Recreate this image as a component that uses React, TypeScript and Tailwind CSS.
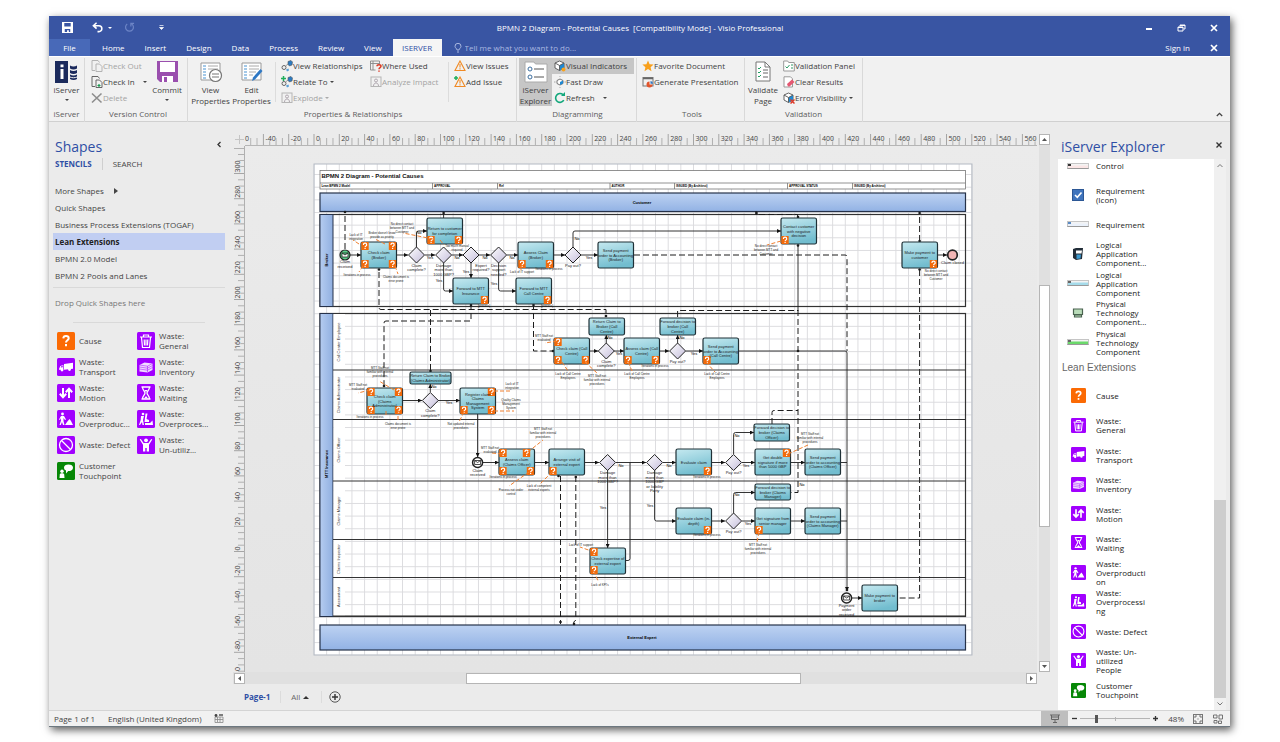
import React from "react";

type Pt = { x: number; y: number };
type Corner = "tl" | "tr" | "bl" | "br" | "tm";
type Task = Pt & { w?: number; h?: number; t: string[]; q?: Corner[] };

const FONT = "'Open Sans','Noto Sans',sans-serif";

/* ---------- stencil icons ---------- */

const ORANGE = "#fb6a04";
const PURPLE = "#a100ff";
const GREEN = "#068706";

const glyphs: Record<string, React.ReactNode> = {
  cause: (
    <g fill="none" stroke="#fff" strokeWidth="2">
      <path d="M6.3 6.4C6.4 4.6 7.6 4 9 4c1.500 0 2.700.8 2.700 2.200 0 2-2.700 2-2.700 4.200" />
      <path d="M9 12v2.200" />
    </g>
  ),
  general: (
    <g fill="none" stroke="#fff" strokeWidth="1.200">
      <path d="M3 5h12M6.500 4.700V3h5v1.700M4.500 5.500l1 10h7l1-10M7.200 7.500l.3 6M9 7.500v6M10.800 7.500l-.3 6" />
    </g>
  ),
  transport: (
    <g fill="#fff">
      <path d="M7 6l9-1.200v5.900l-9 1zM2 11l1.300-3 3-1v4.800H2z" />
      <circle cx="5" cy="12" r="1.400" />
      <circle cx="12.500" cy="11.500" r="1.400" />
      <path d="M3.700 9.500L4.500 8l1.200-.3v1.500z" fill={PURPLE} />
    </g>
  ),
  inventory: (
    <g>
      <path d="M2.500 7l5-2.500 8 1v6.500l-5 2.500-8-1z" fill="#f0dcff" />
      <path d="M2.500 7l8 1.200 5-2.700M2.500 9l8 1.200 5-2.700M2.500 11l8 1.200 5-2.700M10.500 8v6" fill="none" stroke={PURPLE} strokeWidth=".5" />
    </g>
  ),
  motion: (
    <g fill="none" stroke="#fff" strokeWidth="2">
      <path d="M6 4v9M2.800 9.800L6 13.200l3.200-3.400M12 14V5M8.800 8.200L12 4.800l3.200 3.400" />
    </g>
  ),
  waiting: (
    <g fill="none" stroke="#fff" strokeWidth="1.300">
      <path d="M4.500 3h9M4.500 15h9M5.500 3c0 3.500 2.500 4 2.500 6s-2.500 2.500-2.500 6M12.500 3c0 3.500-2.500 4-2.500 6s2.500 2.500 2.500 6" />
      <path d="M7 14.500l2-2.500 2 2.500zM7.300 6h3.400L9 8z" fill="#fff" stroke="none" />
    </g>
  ),
  overproduction: (
    <g fill="#fff">
      <circle cx="5.500" cy="4" r="1.400" />
      <path d="M4 6h3l2 3.500-1 .5-1.500-2V11l1 4H6l-1-3-1.200 3H2.500L4 10.500V8l-1 2-1-.4zM8 15l2-3 2.500-3 1.500 2 2 4z" />
    </g>
  ),
  overprocessing: (
    <g fill="#fff">
      <circle cx="6" cy="4" r="1.300" />
      <path d="M4 6h3l-1 4 1 5H5.500L5 12l-2 3H2l1.700-5zM8.500 3.500h2L9.500 9l2.500 1v2H7.500zM8 13h5l2.500-2.500L16 15H8z" />
    </g>
  ),
  defect: (
    <g fill="none" stroke="#fff" strokeWidth="1.300">
      <circle cx="9" cy="9" r="6.500" />
      <path d="M4.500 4.500l9 9" />
    </g>
  ),
  people: (
    <g fill="#fff">
      <circle cx="9" cy="4.300" r="1.900" />
      <path d="M2.700 3.500L3.800 3l2.800 4h4.800l2.800-4 1.100.5-3.300 5.300v6.700h-2.300V12H8.300v3.500H6V8.800z" />
    </g>
  ),
  customer: (
    <g fill="#fff">
      <circle cx="5" cy="9.300" r="1.700" />
      <path d="M2.500 16l.3-3.500c.1-1 1-1.300 2.200-1.300s2 .5 2.200 1.300L7.500 16z" />
      <path d="M7 5.500c0-2 1.800-3 4.500-3s4.500 1 4.500 3.200c0 2.300-2 3.400-4.800 3.400L9 11.500V8.600C7.700 8 7 7 7 5.500z" />
    </g>
  ),
};

function Tile({ kind, className }: { kind: string; className: string }) {
  const bg = kind === "cause" ? ORANGE : kind === "customer" ? GREEN : PURPLE;
  return (
    <svg viewBox="0 0 18 18" className={className} aria-hidden="true">
      <rect width="18" height="18" rx="1.500" fill={bg} />
      {glyphs[kind]}
    </svg>
  );
}

const stencil: { kind: string; short: string[]; long: string[] }[] = [
  { kind: "cause", short: ["Cause"], long: ["Cause"] },
  { kind: "general", short: ["Waste:", "General"], long: ["Waste:", "General"] },
  { kind: "transport", short: ["Waste:", "Transport"], long: ["Waste:", "Transport"] },
  { kind: "inventory", short: ["Waste:", "Inventory"], long: ["Waste:", "Inventory"] },
  { kind: "motion", short: ["Waste:", "Motion"], long: ["Waste:", "Motion"] },
  { kind: "waiting", short: ["Waste:", "Waiting"], long: ["Waste:", "Waiting"] },
  { kind: "overproduction", short: ["Waste:", "Overproduc..."], long: ["Waste:", "Overproducti", "on"] },
  { kind: "overprocessing", short: ["Waste:", "Overproces..."], long: ["Waste:", "Overprocessi", "ng"] },
  { kind: "defect", short: ["Waste: Defect"], long: ["Waste: Defect"] },
  { kind: "people", short: ["Waste:", "Un-utiliz..."], long: ["Waste: Un-", "utilized", "People"] },
  { kind: "customer", short: ["Customer", "Touchpoint"], long: ["Customer", "Touchpoint"] },
];

function Lines({ t }: { t: string[] }) {
  return (
    <>
      {t.map((l, i) => (
        <span key={i} className="block whitespace-nowrap">
          {l}
        </span>
      ))}
    </>
  );
}

/* ---------- ribbon ---------- */

const Ic = ({ children, className = "h-3 w-3" }: { children: React.ReactNode; className?: string }) => (
  <svg viewBox="0 0 12 12" className={"shrink-0 " + className} fill="none" aria-hidden="true">
    {children}
  </svg>
);

const doc = (c: string) => <path d="M1 .5h6l1.500 2M1 .5v10h3M5 4h3.500L11 6.500v5H5z" stroke={c} />;
const link = (
  <>
    <circle cx="3" cy="7.500" r="2" stroke="#666" />
    <path d="M7 1.500l3-1 1.500 1.500-.5 3-2.500 1L7 4.500z" fill="#2b7cc4" stroke="#555" strokeWidth=".6" />
    <path d="M5 9.500l2.500-1 .5 2-2 1z" fill="#5aa0d8" />
    <path d="M4.500 6L7 4" stroke="#888" strokeWidth=".8" />
  </>
);
const cube = (
  <>
    <path d="M1 3l4.500-2L10 3v5l-4.500 2.500L1 8z" fill="#fff" stroke="#555" strokeWidth=".9" />
    <path d="M5.500 5.500L10 3v5l-4.500 2.500z" fill="#1e88d2" />
    <path d="M1 3l4.500 2.500L10 3M5.500 5.500v5" stroke="#555" strokeWidth=".9" />
  </>
);
const person = (
  <>
    <rect x="1" y="1" width="10" height="9.500" stroke="#b5b5b5" />
    <circle cx="6" cy="4.500" r="1.500" stroke="#b0a8b0" />
    <path d="M3.500 10c0-4 5-4 5 0" stroke="#b0a8b0" />
  </>
);
const warn = <path d="M6 1l5 9.500H1zM6 4v3.500M6 8.300v1.200" stroke="#f08a24" strokeWidth="1.100" />;

const icons: Record<string, React.ReactNode> = {
  checkOut: doc("#b3b3b3"),
  checkIn: (
    <>
      {doc("#666")}
      <path d="M6.500 9.500h3M8 8v3" stroke="#1a9a50" strokeWidth="1.200" />
    </>
  ),
  del: <path d="M1 1.500l9.500 9M10.500 1.500L1 10.500" stroke="#8d8d8d" strokeWidth="1.600" />,
  viewRel: link,
  relate: (
    <>
      {link}
      <path d="M0 2.500h5M2.500 0v5" stroke="#1fae5b" strokeWidth="1.500" />
    </>
  ),
  explode: person,
  analyze: person,
  where: (
    <>
      <path d="M.5 1h9v3.500M.5 1v9h5M.5 3.500h9M3 1v9" stroke="#888" strokeWidth=".9" />
      <path d="M7 6.300c0-2 4-2 4 0 0 1.300-2 1.300-2 3M9 10.500v1.300" stroke="#dd3b26" strokeWidth="1.500" />
    </>
  ),
  viewIssue: warn,
  addIssue: (
    <>
      {warn}
      <path d="M0 2h4M2 0v4" stroke="#1fae5b" strokeWidth="1.500" />
    </>
  ),
  visual: (
    <>
      {cube}
      <circle cx="9.500" cy="9.500" r="2" fill="#f9a21b" />
    </>
  ),
  fast: (
    <>
      <path d="M6 3l3 1.500v3L6 9 3 7.500v-3z" fill="#fff" stroke="#666" strokeWidth=".9" />
      <path d="M6 6l3-1.500v3L6 9z" fill="#1e88d2" />
      <path d="M0 6h1.500M10.500 6H12M6 0v1M6 11v1" stroke="#aaa" />
    </>
  ),
  refresh: (
    <>
      <path d="M9.800 8.200A4.400 4.400 0 1 1 9 2.700" stroke="#12a77b" strokeWidth="1.600" />
      <path d="M7 4h4V0z" fill="#12a77b" />
    </>
  ),
  star: <path d="M6 .5l1.600 3.700 4 .3-3 2.700.9 4L6 9.100l-3.500 2.100.9-4-3-2.700 4-.3z" fill="#f8a01c" />,
  present: (
    <>
      <rect x="1" y="1.500" width="10" height="8.500" stroke="#777" />
      <path d="M1 2.500h10" stroke="#666" strokeWidth="1.500" />
      <path d="M7.500 5.500a3 3 0 1 0 3 3h-3z" fill="#e2552c" />
      <path d="M8.500 5v2.700H11A2.700 2.700 0 0 0 8.500 5z" fill="#2f78c4" />
    </>
  ),
  vpanel: (
    <>
      <path d="M.7 1h4l1 1.500h5.600V11H.7z" fill="#fff" stroke="#999" />
      <path d="M2.500 6.500l1.500 1.500L6.500 5M8 5h2M8 8h2" stroke="#2d9b67" />
    </>
  ),
  clear: (
    <>
      <path d="M1 .8h6.500l2 2V11H1z" fill="#fff" stroke="#999" />
      <path d="M4 8l5-4.500 2.500 2.500-5 4.500H5z" fill="#e45872" />
    </>
  ),
  error: (
    <>
      {cube}
      <path d="M7.500 7.500l4 4M11.500 7.500l-4 4" stroke="#dc3a2a" strokeWidth="1.500" />
    </>
  ),
};

function Caret({ muted, className = "" }: { muted?: boolean; className?: string }) {
  return (
    <svg viewBox="0 0 4 2" className={"h-[2px] w-1 shrink-0 " + className} aria-hidden="true">
      <path d="M0 0h4L2 2z" fill={muted ? "#aaa" : "#444"} />
    </svg>
  );
}

type SmallProps = { icon: string; label: string; muted?: boolean; active?: boolean; caret?: "near" | "far" };
function Small({ icon, label, muted, active, caret }: SmallProps) {
  return (
    <button
      type="button"
      disabled={muted}
      className={
        "flex h-4 items-center pr-1 pl-[2px] whitespace-nowrap " +
        (muted ? "text-[#a3a3a3] " : "text-[#3f3f3f] ") +
        (active ? "bg-[#c6c6c6]" : "")
      }
    >
      <Ic>{icons[icon]}</Ic>
      <span>{label}</span>
      {caret && <Caret muted={muted} className={caret === "far" ? "ml-2" : "ml-[2px]"} />}
    </button>
  );
}

function Big({ children, label, caret, active, className }: { children: React.ReactNode; label: string[]; caret?: boolean; active?: boolean; className: string }) {
  return (
    <button type="button" className={"flex h-12 flex-col items-center pt-[2px] leading-[11px] text-[#3f3f3f] " + (active ? "bg-[#c6c6c6] " : "") + className}>
      <span className="flex h-6 items-center">{children}</span>
      <Lines t={label} />
      {caret && <Caret className="mt-1" />}
    </button>
  );
}

function Group({ name, className, children }: { name: string; className: string; children: React.ReactNode }) {
  return (
    <section aria-label={name} className={"flex shrink-0 flex-col border-r border-[#d9d9d9] " + className}>
      <div className="flex h-12">{children}</div>
      <p className="text-center text-[8px] leading-4 text-[#5c5c5c]">{name}</p>
    </section>
  );
}

const Rule = () => <span className="my-1 w-px shrink-0 bg-[#dcdcdc]" />;

function Ribbon() {
  return (
    <div className="flex h-[65px] items-start border-b border-[#d0d0d0] bg-[#f1f1f1] pt-px text-[8px]">
      <Group name="iServer" className="w-9">
        <Big label={["iServer"]} caret className="w-full">
          <svg viewBox="0 0 24 24" className="h-6 w-6" aria-hidden="true">
            <path d="M0 1h13v22H0z" fill="#1b2a5c" />
            <path d="M5.500 9h3v10h-3zM5.500 4.500h3v2.800h-3z" fill="#fff" />
            <path d="M15 5.500c2 1.200 5 1.200 7 0v3c-2 1.200-5 1.200-7 0zM15 10c2 1.200 5 1.200 7 0v3c-2 1.200-5 1.200-7 0zM15 14.500c2 1.200 5 1.200 7 0v4.500c-2 1.200-5 1.200-7 0z" fill="#1b2a5c" />
            <path d="M15 17c2 1 5 1 7 0" stroke="#f1f1f1" fill="none" />
          </svg>
        </Big>
      </Group>
      <Group name="Version Control" className="w-[103px] pl-1">
        <div className="flex w-[60px] flex-col items-start">
          <Small icon="checkOut" label="Check Out" muted />
          <Small icon="checkIn" label="Check In" caret="far" />
          <Small icon="del" label="Delete" muted />
        </div>
        <Big label={["Commit"]} caret className="w-9">
          <svg viewBox="0 0 24 24" className="h-6 w-6" aria-hidden="true">
            <path d="M2 1h21v21H5l-3-3z" fill="#9a4fae" />
            <path d="M5 2h15v10H5z" fill="#fff" />
            <path d="M7 16h11v6H7z" fill="#fff" />
            <path d="M9 17h3v5H9z" fill="#9a4fae" />
          </svg>
        </Big>
      </Group>
      <Group name="Properties & Relationships" className="w-[329px] pl-[2px]">
        <Big label={["View", "Properties"]} className="w-[41px]">
          <svg viewBox="0 0 24 24" className="h-6 w-6" fill="none" aria-hidden="true">
            <path d="M2 3h19v17H2z" fill="#fff" stroke="#999" />
            <path d="M4 6h3M4 9h3M4 12h3M4 15h3M4 18h3" stroke="#4b93d1" strokeWidth="1.200" />
            <path d="M9 6h10M9 9h10" stroke="#aaa" />
            <circle cx="16.500" cy="15.500" r="6" fill="#fff" stroke="#777" strokeWidth="1.200" />
            <path d="M13 14h7M13 17h7" stroke="#777" strokeWidth="1.200" />
          </svg>
        </Big>
        <Big label={["Edit", "Properties"]} className="w-[41px]">
          <svg viewBox="0 0 24 24" className="h-6 w-6" fill="none" aria-hidden="true">
            <path d="M2 3h19v17H2z" fill="#fff" stroke="#999" />
            <path d="M4 6h3M4 9h3M4 12h3M4 15h3M4 18h3" stroke="#4b93d1" strokeWidth="1.200" />
            <path d="M9 6h10M9 9h10M9 12h7M9 15h4" stroke="#aaa" />
            <path d="M12 21l1-3.500L20.500 9l2 2-7.500 8.500z" fill="#2f78c4" />
          </svg>
        </Big>
        <span className="w-[3px]" />
        <Rule />
        <div className="flex w-[92px] flex-col items-start pl-[3px]">
          <Small icon="viewRel" label="View Relationships" />
          <Small icon="relate" label="Relate To" caret="near" />
          <Small icon="explode" label="Explode" muted caret="near" />
        </div>
        <div className="flex w-20 flex-col items-start">
          <Small icon="where" label="Where Used" />
          <Small icon="analyze" label="Analyze Impact" muted />
        </div>
        <Rule />
        <div className="flex flex-col items-start pl-[3px]">
          <Small icon="viewIssue" label="View Issues" />
          <Small icon="addIssue" label="Add Issue" />
        </div>
      </Group>
      <Group name="Diagramming" className="w-[120px] pl-[2px]">
        <Big label={["iServer", "Explorer"]} active className="w-[33px]">
          <svg viewBox="0 0 24 24" className="h-6 w-6" fill="none" aria-hidden="true">
            <path d="M1 2h9l1.500 2H23v18H1z" fill="#fff" stroke="#aaa" />
            <circle cx="6" cy="9" r="2" stroke="#3c6e9f" />
            <circle cx="6" cy="17" r="2" stroke="#3c6e9f" />
            <path d="M10 9h10M10 17h10" stroke="#555" />
          </svg>
        </Big>
        <div className="flex w-[82px] flex-col">
          <Small icon="visual" label="Visual Indicators" active />
          <Small icon="fast" label="Fast Draw" />
          <Small icon="refresh" label="Refresh" caret="far" />
        </div>
      </Group>
      <Group name="Tools" className="w-[108px] pl-[3px]">
        <div className="flex flex-col items-start">
          <Small icon="star" label="Favorite Document" />
          <Small icon="present" label="Generate Presentation" />
        </div>
      </Group>
      <Group name="Validation" className="w-[118px]">
        <Big label={["Validate", "Page"]} className="w-9">
          <svg viewBox="0 0 24 24" className="h-6 w-6" fill="none" aria-hidden="true">
            <path d="M5 2h9l5 5v14H5z" fill="#fff" stroke="#777" />
            <path d="M14 2v5h5" stroke="#777" />
            <path d="M7 8l1 1 2-2M7 12l1 1 2-2M7 16l1 1 2-2" stroke="#22a065" />
            <path d="M12 10h5M12 13h5M12 17h5" stroke="#666" />
          </svg>
        </Big>
        <div className="flex flex-col items-start">
          <Small icon="vpanel" label="Validation Panel" />
          <Small icon="clear" label="Clear Results" />
          <Small icon="error" label="Error Visibility" caret="near" />
        </div>
      </Group>
      <button type="button" aria-label="Collapse the ribbon" className="mt-auto mr-[7px] mb-1 ml-auto">
        <svg viewBox="0 0 7 5" className="h-[5px] w-[7px]" fill="none" aria-hidden="true">
          <path d="M.8 4l2.700-2.700L6.200 4" stroke="#444" strokeWidth="1.300" />
        </svg>
      </button>
    </div>
  );
}

/* ---------- diagram ---------- */

const tasks: Task[] = [
  { x: 361, y: 242, t: ["Check claim", "(Broker)"], q: ["tl", "tr", "bl", "br"] },
  { x: 427, y: 218, t: ["Return to customer", "for completion"], q: ["bl", "br"] },
  { x: 518, y: 242, t: ["Assess Claim", "(Broker)"], q: ["bl", "br"] },
  { x: 598, y: 242, t: ["Send payment", "order to Accounting", "(Broker)"] },
  { x: 453, y: 278, t: ["Forward to MTT", "Insurance"], q: ["br"] },
  { x: 516, y: 278, t: ["Forward to MTT", "Call Centre"], q: ["br"] },
  { x: 781, y: 218, t: ["Contact customer", "with negative", "decision"], q: ["bl"] },
  { x: 902, y: 242, t: ["Make payment to", "customer"], q: ["br"] },
  { x: 589, y: 318, h: 17, t: ["Return Claim to", "Broker (Call", "Centre)"] },
  { x: 554, y: 338, t: ["Check claim (Call", "Centre)"], q: ["tl", "bl", "br"] },
  { x: 624, y: 338, t: ["Assess claim (Call", "Centre)"], q: ["bl", "br"] },
  { x: 660, y: 318, h: 17, t: ["Forward decision to", "broker (Call", "Centre)"] },
  { x: 703, y: 338, t: ["Send payment", "order to Accounting", "(Call Centre)"], q: ["bl"] },
  { x: 410, y: 372, w: 41, h: 12, t: ["Return Claim to Broker", "(Claims Administrator)"] },
  { x: 367, y: 388, t: ["Check claim", "(Claims", "Administrator)"], q: ["tl", "tr", "bl", "br"] },
  { x: 460, y: 388, t: ["Register claim", "Claims", "Management", "System"], q: ["tr", "bl", "br"] },
  { x: 499, y: 449, t: ["Assess claim", "(Claims Officer)"], q: ["tl", "tm", "bl", "br"] },
  { x: 549, y: 449, t: ["Arrange visit of", "external expert"], q: ["bl"] },
  { x: 676, y: 449, t: ["Evaluate claim"], q: ["br"] },
  { x: 755, y: 449, t: ["Get double", "signature if more", "than 5000 GBP"], q: ["tr"] },
  { x: 754, y: 424, h: 17, t: ["Forward decision to", "broker (Claims", "Officer)"] },
  { x: 805, y: 449, t: ["Send payment", "order to accounting", "(Claims Officer)"] },
  { x: 755, y: 484, h: 16, t: ["Forward decision to", "broker (Claims", "Manager)"] },
  { x: 676, y: 508, t: ["Evaluate claim (in-", "depth)"], q: ["br"] },
  { x: 755, y: 508, t: ["Get signature from", "senior manager"], q: ["bl"] },
  { x: 805, y: 508, t: ["Send payment", "order to accounting", "(Claims Manager)"] },
  { x: 590, y: 548, t: ["Check expertise of", "external expert"], q: ["tl", "bl"] },
  { x: 862, y: 585, t: ["Make payment to", "broker"] },
];

const gateways: (Pt & { lx?: number; t: string[] })[] = [
  { x: 416.5, y: 255, t: ["Claim", "complete?"] },
  { x: 443.6, y: 255, t: ["Damage", "more than", "1000 GBP?"] },
  { x: 471, y: 255, lx: 481, t: ["Expert", "required?"] },
  { x: 498.6, y: 255, t: ["Decision", "support", "needed?"] },
  { x: 573, y: 255, t: ["Pay out?"] },
  { x: 606.3, y: 351, t: ["Claim", "complete?"] },
  { x: 677.6, y: 351, t: ["Pay out?"] },
  { x: 430.3, y: 400.5, t: ["Claim", "complete?"] },
  { x: 607.6, y: 462.5, t: ["Damage", "more than", "1000 GBP?"] },
  { x: 654.6, y: 462.5, t: ["Damage", "more than", "1000 GBP", "or liability", "Party"] },
  { x: 733.6, y: 462.5, t: ["Pay out?"] },
  { x: 733.6, y: 521, t: ["Pay out?"] },
];

const notes: [number, number, string[]][] = [
  [356, 236, ["Lack of IT", "integration"]],
  [382, 234, ["Broker doesn't know", "provide as priority"]],
  [402, 225, ["No direct contact", "between MTT and", "Customer"]],
  [457, 247, ["Too much manual", "required"]],
  [357, 276, ["Iterations in process"]],
  [396, 278, ["Claims document is", "error prone"]],
  [522, 273, ["Lack of IT support"]],
  [549, 270, ["Iterations in process"]],
  [484, 307, ["[process]"]],
  [547, 307, ["[process]"]],
  [544, 337, ["MTT Staff not", "evaluated"]],
  [766, 247, ["No direct contact", "between MTT and", "Customer"]],
  [936, 272, ["No direct contact", "between MTT and", "Customer"]],
  [568, 375, ["Lack of Call Centre", "Employees"]],
  [597, 377, ["MTT Staff not", "familiar with internal", "procedures"]],
  [637, 375, ["Lack of Call Centre", "Employees"]],
  [717, 375, ["Lack of Call Centre", "Employees"]],
  [655, 367, ["Iterations in process"]],
  [380, 369, ["MTT Staff not", "familiar with internal", "procedures"]],
  [358, 386, ["MTT Staff not", "evaluated"]],
  [370, 418, ["Iterations in process"]],
  [398, 425, ["Claims document is", "error prone"]],
  [461, 425, ["Not updated internal", "procedures"]],
  [512, 385, ["Lack of IT", "integration"]],
  [511, 401, ["Quality Claims", "Management", "System"]],
  [543, 430, ["MTT Staff not", "familiar with internal", "procedures"]],
  [490, 449, ["MTT Staff not", "evaluated"]],
  [503, 478, ["Iterations in process"]],
  [511, 491, ["Process not under", "control"]],
  [539, 487, ["Lack of competent", "external experts"]],
  [581, 546, ["Lack of IT support"]],
  [600, 586, ["Lack of KPI's"]],
  [707, 478, ["Iterations in process"]],
  [707, 536, ["Iterations in process"]],
  [810, 435, ["MTT Staff not", "familiar with internal", "procedures"]],
  [758, 546, ["MTT Staff not", "familiar with internal", "procedures"]],
];

const flags: [number, number, string][] = [
  [419, 234, "No"], [430, 259, "Yes"], [457, 259, "No"], [485, 259, "No"], [512, 259, "No"], [589, 259, "Yes"],
  [577, 240, "No"], [439, 282, "Yes"], [466, 273, "Yes"], [494, 285, "Yes"], [610, 339, "No"], [619, 355, "Yes"],
  [682, 339, "No"], [694, 355, "Yes"], [434, 388, "No"], [449, 404, "Yes"], [621, 467, "No"], [603, 509, "Yes"],
  [669, 467, "No"], [650, 507, "Yes"], [737, 437, "No"], [746, 467, "Yes"], [737, 496, "No"], [748, 525, "Yes"], [802, 486, "No"],
];

const solid = [
  "M350 255H361", "M397 255H408", "M425 255H435", "M452 255H463", "M479 255H490", "M507 255H518", "M554 255H565", "M581 255H598",
  "M416.500 247V233q0-2 2-2H427", "M573 247V233q0-2 2-2H781", "M443.600 263V289q0 2 2 2H453", "M498.600 263V289q0 2 2 2H516", "M471 263V278", "M937 255H947",
  "M589 351H598", "M614 351H624", "M659 351H669", "M686 351H703", "M606.300 343V335", "M677.600 343V335", "M738 351H845q2 0 2 2V591",
  "M402 400.500H422", "M438 400.500H460", "M430.300 392V384", "M477.600 413V457", "M483 462.500H499", "M534 462.500H549",
  "M585 462.500H599", "M616 462.500H646", "M607.600 470V548", "M663 462.500H676", "M712 462.500H725", "M742 462.500H755",
  "M791 462.500H805", "M733.600 454V434.500q0-2 2-2H754", "M654.600 470V519q0 2 2 2H676", "M712 521H725", "M742 521H755", "M791 521H805",
  "M733.600 513V494.500q0-2 2-2H755", "M852 598H862",
];

const dashed = [
  "M345 249V212", "M379 272V307.500q0 2 2 2H606V317", "M471 304V321H386q-2 0-2 2V387", "M430.500 310V372", "M533.500 304V351H554",
  "M634 255H845q2 0 2 2V351", "M677.600 317V310.500H798", "M798 310V492.500H791", "M772 424V412.500q0-2 2-2H798", "M797.600 218V214.500H756V211",
  "M919.600 241V213", "M919.600 270V598H898", "M560.500 476V624", "M575.800 476V620l-2 2v3",
];

const leads =
  "M359 244l-6-4M385 244l-10-5M433 239l-30-6M440 240l4 5M363 266l-4 6M395 266l3 8M521 266v5M548 266v2M557 341l-12 2M562 362l6 9M585 362l12 11M628 362l4 9M706 362l9 10M781 241l-14 4M370 390l-12 3M394 390l-15-9M398 410v12M464 412l-5 10M494 391h18M494 411h20M528 452l15-12M502 454l-10-1M529 472l-20 14M552 472l-12 12M594 552l-14-5M594 571l4 10M788 454l20-9M759 532l-2 10M386 411v5";

const lanes: [string, number, number][] = [
  ["Call Center Employee", 342, 370],
  ["Claims Administrator", 395, 419.5],
  ["Claims Officer", 450, 481],
  ["Claims Manager", 511, 539.5],
  ["Claims Inspector", 559, 577.5],
  ["Accountant", 597, 616],
];

function Mark({ x, y }: Pt) {
  return (
    <g>
      <rect x={x - 3.7} y={y - 4} width="7.400" height="8" rx=".5" fill="#f26a0a" />
      <path d={`M${x - 1.6} ${y - 1}c0-2.500 3.300-2.500 3.300 0 0 1.200-1.600 1-1.600 2.300M${x + 0.1} ${y + 1.900}v1.200`} stroke="#fff" strokeWidth="1.200" fill="none" />
    </g>
  );
}

function TextBlock({ x, y, t, size, lead }: Pt & { t: string[]; size: number; lead: number }) {
  return (
    <text x={x} y={y} fontSize={size} textAnchor="middle" fill="#1c1c1c">
      {t.map((l, i) => (
        <tspan key={i} x={x} dy={i ? lead : 0}>
          {l}
        </tspan>
      ))}
    </text>
  );
}

function Diagram() {
  const headers: [number, string][] = [
    [320, "Lean BPMN 2 Model"], [432.5, "APPROVAL"], [497.5, "Ref"], [610, "AUTHOR"], [674.5, "ISSUED (By Architect)"], [787.5, "APPROVAL STATUS"], [852.5, "ISSUED (By Architect)"],
  ];
  return (
    <svg viewBox="245 146 792 526" className="min-h-0 min-w-0 flex-1 bg-linear-to-b from-[#ebebeb] to-[#e4e4e4]" fontFamily="'Liberation Sans',Arial,sans-serif" role="img" aria-label="BPMN 2 Diagram - Potential Causes">
      <defs>
        <pattern id="grid" x="313.500" y="161.400" width="12.650" height="12.650" patternUnits="userSpaceOnUse">
          <path d="M0 .5H12.650M.5 0V12.650" stroke="#d9d9dc" strokeWidth=".9" fill="none" />
        </pattern>
        <linearGradient id="pool" x2="0" y2="1">
          <stop offset="0" stopColor="#bdd2f2" />
          <stop offset="1" stopColor="#92b2e4" />
        </linearGradient>
        <linearGradient id="poolSide" x2="1" y2="0">
          <stop offset="0" stopColor="#b5ccf0" />
          <stop offset="1" stopColor="#90afe0" />
        </linearGradient>
        <linearGradient id="task" x2=".3" y2="1">
          <stop offset="0" stopColor="#c5e9f0" />
          <stop offset="1" stopColor="#72bdcf" />
        </linearGradient>
        <linearGradient id="gate" x2="1" y2="1">
          <stop offset="0" stopColor="#fff" />
          <stop offset="1" stopColor="#c4bddb" />
        </linearGradient>
        <marker id="arrow" viewBox="0 0 4 4" refX="4" refY="2" markerWidth="4" markerHeight="4" markerUnits="userSpaceOnUse" orient="auto">
          <path d="M0 0l4 2-4 2z" fill="#111" />
        </marker>
      </defs>
      <rect x="314" y="164" width="658" height="491" fill="#fff" />
      <rect x="314" y="164" width="658" height="491" fill="url(#grid)" stroke="#b4bac3" />
      <g stroke="#777" fill="#fff" strokeWidth=".8">
        <rect x="320" y="170.500" width="645.500" height="18.500" />
        <path d="M320 183H965.500M432.500 183v6M497.500 183v6M610 183v6M674.500 183v6M787.500 183v6M852.500 183v6" />
      </g>
      <text x="321.500" y="178" fontSize="6" fontWeight="bold" fill="#111">BPMN 2 Diagram - Potential Causes</text>
      {headers.map(([x, t], i) => (
        <text key={i} x={x + 1.5} y="187" fontSize="3" fontWeight="bold">
          {t}
        </text>
      ))}
      <g fill="url(#pool)" stroke="#26324a" strokeWidth="1.200">
        <rect x="320" y="193" width="645.500" height="18.500" />
        <rect x="320" y="625" width="645.500" height="25" />
      </g>
      <text x="642" y="203.500" fontSize="4" fontWeight="bold" textAnchor="middle">Customer</text>
      <text x="642" y="638.500" fontSize="4" fontWeight="bold" textAnchor="middle">External Expert</text>
      <g fill="none" stroke="#333" strokeWidth="1.200">
        <rect x="320" y="214.500" width="645.500" height="92" />
        <rect x="320" y="313.500" width="645.500" height="303" />
      </g>
      <rect x="320" y="214.500" width="13" height="92" fill="url(#poolSide)" stroke="#26324a" />
      <rect x="320" y="313.500" width="13" height="303" fill="url(#poolSide)" stroke="#26324a" />
      <rect x="333.500" y="314" width="11.500" height="302" fill="#fff" />
      <text transform="translate(327.500 260) rotate(-90)" fontSize="4" fontWeight="bold" textAnchor="middle">Broker</text>
      <text transform="translate(327.500 464) rotate(-90)" fontSize="4" fontWeight="bold" textAnchor="middle">MTT Insurance</text>
      {lanes.map(([t, c, b]) => (
        <g key={t}>
          <text transform={`translate(340 ${c}) rotate(-90)`} fontSize="4" textAnchor="middle" fill="#333">
            {t}
          </text>
          <path d={`M333 ${b}H965.500`} stroke="#333" strokeWidth="1" />
        </g>
      ))}
      <g fill="none" stroke="#1d1d1d" strokeWidth=".9" strokeLinejoin="round">
        {solid.map((d) => (
          <path key={d} d={d} markerEnd="url(#arrow)" />
        ))}
        <path d="M443.600 218V212M798 244V311M626 560.500H628q2 0 2-2V462.500M840 462.500H847M840 521H847" />
      </g>
      <g fill="none" stroke="#1d1d1d" strokeWidth="1" strokeDasharray="6 3" strokeLinejoin="round">
        {dashed.map((d) => (
          <path key={d} d={d} />
        ))}
      </g>
      <g fill="#1d1d1d">
        {[[345, 212], [443.6, 213], [379, 269.5], [384, 386], [430.5, 371], [756.5, 213], [798, 217], [798, 245.5], [798, 351], [919.6, 213], [919.6, 241], [919.6, 269.5], [560.5, 622], [558.5, 476], [575.8, 477], [574, 624], [553, 351], [471, 305], [533.5, 305], [606, 316], [847, 590]].map(([x, y], i) => (
          <circle key={i} cx={x} cy={y} r="1.300" />
        ))}
      </g>
      {gateways.map((g, i) => (
        <g key={i}>
          <path d={`M${g.x} ${g.y - 8}l8 8-8 8-8-8z`} fill="url(#gate)" stroke="#222" strokeWidth="1" />
          <TextBlock x={g.lx ?? g.x} y={g.y + 11.5} t={g.t} size={4} lead={4.5} />
        </g>
      ))}
      <g stroke="#222" strokeWidth="1.200">
        <circle cx="345" cy="255" r="5" fill="#5bd08a" />
        <circle cx="477.600" cy="462.500" r="5" fill="#fff" strokeWidth="1.500" />
        <circle cx="846.600" cy="598" r="5" fill="#fff" strokeWidth="1.500" />
        <circle cx="952.500" cy="255" r="4.800" fill="#f2b5b5" strokeWidth="1.700" />
        <path d="M342 253h6v4h-6zl3 2 3-2M474.600 460.500h6v4h-6zl3 2 3-2M843.600 596h6v4h-6zl3 2 3-2" fill="#fff" strokeWidth=".8" />
      </g>
      <TextBlock x={345} y={263} t={["Claim", "received"]} size={4} lead={4.5} />
      <TextBlock x={477.6} y={471.5} t={["Claim", "received"]} size={4} lead={4.5} />
      <TextBlock x={846.6} y={606.5} t={["Payment", "order", "received"]} size={4} lead={4.5} />
      <TextBlock x={952.5} y={264} t={["Claim closed"]} size={4} lead={4.5} />
      {tasks.map((k, i) => {
        const w = k.w ?? 35.5;
        const h = k.h ?? 26;
        const cx = k.x + w / 2;
        const at: Record<Corner, Pt> = {
          tl: { x: k.x + 4, y: k.y + 4 },
          tr: { x: k.x + w - 4, y: k.y + 4 },
          tm: { x: k.x + w - 8, y: k.y + 4 },
          bl: { x: k.x + 4, y: k.y + h - 4 },
          br: { x: k.x + w - 4, y: k.y + h - 4 },
        };
        return (
          <g key={i}>
            <rect x={k.x} y={k.y} width={w} height={h} rx="1.800" fill="url(#task)" stroke="#1f3036" strokeWidth="1.200" />
            {(k.q ?? []).map((c) => (
              <Mark key={c} {...at[c]} />
            ))}
            <TextBlock x={cx} y={k.y + h / 2 + 1.5 - ((k.t.length - 1) * 4.6) / 2} t={k.t} size={4} lead={4.6} />
          </g>
        );
      })}
      <path d={leads} stroke="#f08030" strokeWidth="1" strokeDasharray="4 2" fill="none" />
      {notes.map(([x, y, t], i) => (
        <TextBlock key={i} x={x} y={y} t={t} size={3} lead={4} />
      ))}
      {flags.map(([x, y, t], i) => (
        <text key={i} x={x} y={y} fontSize="4" textAnchor="middle">
          {t}
        </text>
      ))}
    </svg>
  );
}

const STEP = 25.3;

function TopRuler() {
  const marks = Array.from({ length: 31 }, (_, i) => i - 2);
  return (
    <svg viewBox="233 134 804 12" preserveAspectRatio="xMinYMin slice" className="h-3 w-full shrink-0" fontFamily={FONT} aria-hidden="true">
      <path d="M245 145.500H1037M250.700 138v7M257 138v7" stroke="#b5b5b5" />
      <text x="245" y="141" fontSize="7" fill="#444">0</text>
      {marks.map((m) => {
        const x = 314 + m * STEP;
        return (
          <g key={m}>
            <path d={`M${x} 134v11`} stroke="#a5a5a5" />
            <path d={`M${x + STEP / 4} 138v7M${x + STEP / 2} 138v7M${x + (STEP * 3) / 4} 138v7`} stroke="#b0b0b0" />
            <text x={x + 2} y="141" fontSize="7" fill="#444" stroke="#ebebeb" strokeWidth="1" paintOrder="stroke">
              {m * 20}
            </text>
          </g>
        );
      })}
      <path d="M239.500 135v9M235 139.500h9" stroke="#c5c5c5" />
    </svg>
  );
}

function SideRuler() {
  const marks = Array.from({ length: 20 }, (_, i) => 15 - i);
  return (
    <svg viewBox="233 146 12 526" preserveAspectRatio="xMinYMin slice" className="w-3 shrink-0" fontFamily={FONT} aria-hidden="true">
      <path d="M244.500 146V672M234 148.500h10M238 154.500h6M238 160.500h6M238 166.500h6" stroke="#b0b0b0" />
      {marks.map((m) => {
        const y = 173.5 + (15 - m) * 25.2;
        return (
          <g key={m}>
            <path d={`M234 ${y}h10`} stroke="#a5a5a5" />
            <path d={`M238 ${y + 6.3}h6M238 ${y + 12.6}h6M238 ${y + 18.9}h6`} stroke="#b0b0b0" />
            <text transform={`translate(240 ${y - 1}) rotate(-90)`} fontSize="7" fill="#444" stroke="#ebebeb" strokeWidth="1" paintOrder="stroke">
              {m * 20}
            </text>
          </g>
        );
      })}
      <text transform="translate(240 671) rotate(-90)" fontSize="7" fill="#444">0</text>
    </svg>
  );
}

/* ---------- panels ---------- */

function ScrollButton({ dir, label }: { dir: "up" | "down" | "left" | "right"; label: string }) {
  const d = { up: "M0 4h5L2.500 1z", down: "M0 1h5L2.500 4z", left: "M4 0v5L1 2.500z", right: "M1 0v5l3-2.500z" }[dir];
  return (
    <button type="button" aria-label={label} className="flex h-[11px] w-[11px] shrink-0 items-center justify-center border border-[#b5b5b5] bg-white">
      <svg viewBox="0 0 5 5" className="h-[5px] w-[5px]" aria-hidden="true">
        <path d={d} fill="#555" />
      </svg>
    </button>
  );
}

function ShapesPanel() {
  const names = ["More Shapes", "Quick Shapes", "Business Process Extensions (TOGAF)", "Lean Extensions", "BPMN 2.0 Model", "BPMN 2 Pools and Lanes"];
  return (
    <aside className="w-[184px] shrink-0 pt-[15px] pr-2 pl-1 text-[8px] text-[#444]">
      <div className="flex items-center justify-between pl-[2px]">
        <h2 className="text-[14px] leading-[19px] text-[#2f4fa5]">Shapes</h2>
        <button type="button" aria-label="Minimize the Shapes window" className="-mt-1 mr-1">
          <svg viewBox="0 0 4 7" className="h-[7px] w-1" fill="none" aria-hidden="true">
            <path d="M3.500 1L1 3.500 3.500 6" stroke="#333" strokeWidth="1.300" />
          </svg>
        </button>
      </div>
      <div className="flex h-4 items-center pl-[2px]">
        <button type="button" className="font-bold text-[#2f4fa5]">STENCILS</button>
        <span className="mx-[10px] h-3 w-px bg-[#cfcfcf]" />
        <button type="button">SEARCH</button>
      </div>
      <ul className="mt-[10px]">
        {names.map((n, i) => (
          <li key={n}>
            <button
              type="button"
              className={"flex h-[17px] w-full items-center gap-[10px] pl-[2px] text-left whitespace-nowrap " + (i === 3 ? "bg-[#c1cef2] font-bold text-[#222]" : "")}
            >
              {n}
              {i === 0 && (
                <svg viewBox="0 0 4 6" className="h-[6px] w-1" aria-hidden="true">
                  <path d="M0 0l4 3-4 3z" fill="#444" />
                </svg>
              )}
            </button>
          </li>
        ))}
      </ul>
      <div className="mt-[3px] border-t border-[#d9d9d9] pt-[9px] pl-[2px] leading-[11px] text-[#777]">Drop Quick Shapes here</div>
      <div className="mx-5 mt-[14px] border-t border-[#d9d9d9]" />
      <ul className="mt-[5px] grid grid-cols-[80px_1fr] pl-1 leading-[10px]">
        {stencil.map((s) => (
          <li key={s.kind} className="flex h-[26px] items-center gap-1">
            <Tile kind={s.kind} className="h-[18px] w-[18px] shrink-0" />
            <span>
              <Lines t={s.short} />
            </span>
          </li>
        ))}
      </ul>
    </aside>
  );
}

function Bar({ fill, dot }: { fill: string; dot: string }) {
  return (
    <svg viewBox="0 0 22 6" className="h-[6px] w-[22px]" aria-hidden="true">
      <rect x=".5" y=".5" width="21" height="5" fill="#f4f4f4" stroke="#c5c5c5" />
      <path d="M1 2.500h20V5H1z" fill={fill} />
      <path d="M.5 5.500h21" stroke="#999" />
      <path d="M1 1h3v2H1z" fill={dot} />
    </svg>
  );
}

const architecture: { t: string[]; icon: React.ReactNode }[] = [
  {
    t: ["Requirement", "(Icon)"],
    icon: (
      <svg viewBox="0 0 12 12" className="h-3 w-3" aria-hidden="true">
        <rect x=".5" y=".5" width="11" height="11" fill="#3f74bd" stroke="#2c5795" />
        <path d="M3 6l2.300 2.300L9.500 3.500" stroke="#fff" strokeWidth="1.600" fill="none" />
      </svg>
    ),
  },
  { t: ["Requirement"], icon: <Bar fill="#eaf1fb" dot="#5b8bc4" /> },
  {
    t: ["Logical", "Application", "Component..."],
    icon: (
      <svg viewBox="0 0 12 12" className="h-3 w-3" aria-hidden="true">
        <path d="M1 1l3-1h7l-1 11-6 1-3-2z" fill="#222d38" />
        <path d="M4 2.500h6l-.5 3H4z" fill="#fff" />
        <path d="M4.500 6.500h4.500l-.5 4-4 .5z" fill="#3c9ad0" />
      </svg>
    ),
  },
  { t: ["Logical", "Application", "Component"], icon: <Bar fill="#a5dbea" dot="#666" /> },
  {
    t: ["Physical", "Technology", "Component..."],
    icon: (
      <svg viewBox="0 0 12 12" className="h-3 w-3" aria-hidden="true">
        <path d="M1.500 2h9v5.500h-9zM2.500 8h7v2h-7z" fill="#b9dcb9" stroke="#4a6350" strokeWidth="1.200" />
      </svg>
    ),
  },
  { t: ["Physical", "Technology", "Component"], icon: <Bar fill="#6bd96b" dot="#666" /> },
];

function Entry({ icon, t }: { icon: React.ReactNode; t: string[] }) {
  return (
    <li className="flex min-h-0 items-center gap-[7px]">
      <span className="flex w-[22px] justify-center">{icon}</span>
      <span>
        <Lines t={t} />
      </span>
    </li>
  );
}

function ExplorerPanel() {
  return (
    <aside className="flex w-[172px] shrink-0 flex-col pr-1 text-[8px] font-medium">
      <div className="flex h-[37px] items-end justify-between pb-[3px] pl-[3px]">
        <h2 className="text-[14px] leading-[19px] font-normal text-[#2f4fa5]">iServer Explorer</h2>
        <button type="button" aria-label="Close iServer Explorer" className="mr-1 mb-2">
          <svg viewBox="0 0 6 6" className="h-[6px] w-[6px]" aria-hidden="true">
            <path d="M.5.500l5 5M5.500.500l-5 5" stroke="#333" strokeWidth="1.400" />
          </svg>
        </button>
      </div>
      <div className="flex min-h-0 flex-1">
        <div className="flex flex-1 flex-col bg-white pl-[9px] leading-[9px] text-[#222]">
          <ul className="h-[21px] pt-[2px]">
            <Entry icon={<Bar fill="#fbe6e6" dot="#333" />} t={["Control"]} />
          </ul>
          <ul className="grid h-[177px] shrink-0 auto-rows-fr">
            {architecture.map((a, i) => (
              <Entry key={i} {...a} />
            ))}
          </ul>
          <h3 className="-ml-[5px] h-6 pt-[3px] font-['Liberation_Sans',Arial,sans-serif] text-[10px] leading-4 font-normal text-[#666]">Lean Extensions</h3>
          <ul className="grid min-h-0 flex-1 auto-rows-fr pb-[5px]">
            {stencil.map((s) => (
              <Entry key={s.kind} icon={<Tile kind={s.kind} className="h-[15px] w-[15px]" />} t={s.long} />
            ))}
          </ul>
        </div>
        <div className="flex w-3 flex-col items-center bg-[#f0f0f0]">
          <svg viewBox="0 0 6 12" className="h-3 w-[6px]" fill="none" aria-hidden="true">
            <path d="M.5 8L3 5.500 5.500 8" stroke="#777" />
          </svg>
          <span className="flex-[328]" />
          <span className="w-full flex-[198] bg-[#cdcdcd]" />
          <svg viewBox="0 0 6 12" className="h-3 w-[6px]" fill="none" aria-hidden="true">
            <path d="M.5 4.500L3 7l2.500-2.500" stroke="#777" />
          </svg>
        </div>
      </div>
    </aside>
  );
}

function Cross() {
  return (
    <svg viewBox="0 0 8 8" className="h-2 w-2" aria-hidden="true">
      <path d="M1 1l6 6M7 1L1 7" stroke="#fff" strokeWidth="1.700" />
    </svg>
  );
}

export default function App() {
  return (
    <div className="h-screen min-h-[640px] bg-white pt-4 pr-[50px] pb-[15px] pl-[49px] font-['Open_Sans','Noto_Sans',sans-serif] text-[8px] text-[#444]">
      <div className="flex h-full flex-col overflow-hidden border-b border-[#6d7880] bg-[#ebebeb] shadow-[2px_3px_8px_rgba(0,0,0,0.65)]">
        <header className="shrink-0 bg-[#3955a3] text-white">
          <div className="flex h-[23px] items-center">
            <div className="flex flex-1 items-center pl-[13px]">
              <button type="button" aria-label="Save">
                <svg viewBox="0 0 12 12" className="h-[11px] w-[11px]" aria-hidden="true">
                  <path d="M0 0h12v12H0z" fill="#fff" />
                  <path d="M2.500 1h7v4h-7zM3 7.500h6V11H7.500V9h-2v2H3z" fill="#3955a3" />
                </svg>
              </button>
              <button type="button" aria-label="Undo" className="ml-[19px] flex items-center gap-[5px]">
                <svg viewBox="0 0 12 12" className="h-[11px] w-[11px]" fill="none" aria-hidden="true">
                  <path d="M1.500 4h6a3 3 0 0 1 0 6.500H6M5 .8L1.500 4 5 7.200" stroke="#fff" strokeWidth="1.700" />
                </svg>
                <svg viewBox="0 0 4 2" className="h-[2px] w-1" aria-hidden="true">
                  <path d="M0 0h4L2 2z" fill="#fff" />
                </svg>
              </button>
              <button type="button" aria-label="Repeat" className="ml-3" disabled>
                <svg viewBox="0 0 12 12" className="h-[11px] w-[11px]" fill="none" aria-hidden="true">
                  <path d="M8.500 2.200a4.300 4.300 0 1 1-5 0M7.500 5V1.500H11" stroke="#6d85c6" strokeWidth="1.300" />
                </svg>
              </button>
              <button type="button" aria-label="Customize Quick Access Toolbar" className="ml-6">
                <svg viewBox="0 0 5 5" className="h-[5px] w-[5px]" aria-hidden="true">
                  <path d="M.5 .5h4M.5 2.500h4L2.500 4.500z" stroke="#fff" strokeWidth=".7" fill="#fff" />
                </svg>
              </button>
            </div>
            <h1 className="whitespace-pre">BPMN 2 Diagram - Potential Causes  [Compatibility Mode] - Visio Professional</h1>
            <div className="flex flex-1 items-center justify-end gap-6 pr-3">
              <button type="button" aria-label="Minimize">
                <svg viewBox="0 0 8 8" className="h-2 w-2" aria-hidden="true">
                  <path d="M1 5h6" stroke="#fff" strokeWidth="2" />
                </svg>
              </button>
              <button type="button" aria-label="Restore">
                <svg viewBox="0 0 9 8" className="h-2 w-[9px]" fill="none" aria-hidden="true">
                  <path d="M3 2.500V1h5v4H6.500M1 3h5v4H1zM1 3.500h5M3 1.500h5" stroke="#fff" />
                </svg>
              </button>
              <button type="button" aria-label="Close">
                <Cross />
              </button>
            </div>
          </div>
          <div className="flex h-[17px] items-stretch">
            <nav className="flex items-stretch">
              <button type="button" className="w-[41px] bg-[#4869b8]">File</button>
              <span className="w-[2px]" />
              {["Home", "Insert", "Design", "Data", "Process", "Review", "View"].map((t) => (
                <button key={t} type="button" className="px-[10px]">
                  {t}
                </button>
              ))}
              <button type="button" className="ml-px w-[49px] bg-[#f5f5f5] text-[#2f4fa5]">ISERVER</button>
            </nav>
            <label className="flex flex-1 items-center gap-[3px] pl-3">
              <svg viewBox="0 0 8 10" className="h-[10px] w-2" fill="none" aria-hidden="true">
                <path d="M3 7C3 5.500 1 5 1 3.300a3 3 0 0 1 6 0C7 5 5 5.500 5 7zM3 9h2" stroke="#a9b8e0" />
              </svg>
              <input placeholder="Tell me what you want to do..." aria-label="Tell me what you want to do" className="w-40 bg-transparent outline-none placeholder:text-[#a9b8e0]" />
            </label>
            <button type="button">Sign in</button>
            <button type="button" aria-label="Close document" className="mr-3 ml-5">
              <Cross />
            </button>
          </div>
        </header>
        <div className="shrink-0 border-t border-white">
          <Ribbon />
        </div>
        <div className="flex min-h-0 flex-1">
          <ShapesPanel />
          <main className="flex min-w-0 flex-1 flex-col pt-3">
            <div className="flex min-h-0 flex-1">
              <div className="flex min-w-0 flex-1 flex-col">
                <TopRuler />
                <div className="flex min-h-0 flex-1">
                  <SideRuler />
                  <Diagram />
                </div>
                <div className="flex h-3 shrink-0 items-end bg-[#e0e0e0] pl-px">
                  <ScrollButton dir="left" label="Scroll left" />
                  <span className="flex-[222]" />
                  <span className="h-[11px] flex-[333] border border-[#b5b5b5] bg-white" />
                  <span className="flex-[226]" />
                  <ScrollButton dir="right" label="Scroll right" />
                </div>
              </div>
              <div className="mr-2 mb-3 ml-[2px] flex w-[11px] flex-col bg-[#e0e0e0]">
                <ScrollButton dir="up" label="Scroll up" />
                <span className="flex-[140]" />
                <span className="flex-[240] border border-[#b5b5b5] bg-white" />
                <span className="flex-[134]" />
                <ScrollButton dir="down" label="Scroll down" />
              </div>
            </div>
            <div className="flex h-[26px] shrink-0 items-center pl-[11px]">
              <button type="button" className="font-bold text-[#2f4fa5]">Page-1</button>
              <span className="mx-[10px] h-3 w-px bg-[#dcdcdc]" />
              <button type="button" className="flex items-center gap-[3px] text-[#666]">
                All
                <svg viewBox="0 0 6 3" className="h-[3px] w-[6px]" aria-hidden="true">
                  <path d="M0 3h6L3 0z" fill="#333" />
                </svg>
              </button>
              <span className="mr-[7px] ml-3 h-3 w-px bg-[#dcdcdc]" />
              <button type="button" aria-label="Insert page">
                <svg viewBox="0 0 12 12" className="h-3 w-3" fill="none" aria-hidden="true">
                  <circle cx="6" cy="6" r="5.200" stroke="#555" />
                  <path d="M3 6h6M6 3v6" stroke="#333" strokeWidth="1.400" />
                </svg>
              </button>
            </div>
          </main>
          <ExplorerPanel />
        </div>
        <footer className="flex h-4 shrink-0 items-center border-t border-[#d4d4d4] bg-[#f1f1f1] pl-[5px]">
          <span>Page 1 of 1</span>
          <span className="ml-[13px]">English (United Kingdom)</span>
          <svg viewBox="0 0 10 9" className="ml-3 h-[9px] w-[10px]" fill="none" aria-hidden="true">
            <path d="M1 3h8v5.500H1zM1 5.500h8M3.500 3v5M6 3v5" stroke="#888" strokeWidth=".8" />
            <circle cx="2" cy="1.500" r="1.400" fill="#444" />
            <path d="M5 1h4" stroke="#555" strokeWidth="1.500" />
          </svg>
          <div className="ml-auto flex h-full items-center">
            <button type="button" aria-label="Presentation mode" className="mr-1 flex h-full w-[27px] items-center justify-center bg-[#bebebe]">
              <svg viewBox="0 0 10 9" className="h-[9px] w-[10px]" fill="none" aria-hidden="true">
                <path d="M0 1h10M1.500 1v4.500h7V1M5 5.500V8M3 8.500h4M1.500 3h7" stroke="#666" />
              </svg>
            </button>
            <button type="button" aria-label="Zoom out" className="flex w-[5px] justify-center">
              <svg viewBox="0 0 5 5" className="h-[5px] w-[5px]" aria-hidden="true">
                <path d="M0 2.500h5" stroke="#333" strokeWidth="1.300" />
              </svg>
            </button>
            <input
              type="range"
              min={0}
              max={100}
              defaultValue={22}
              aria-label="Zoom"
              className="mx-[3px] h-2 w-[70px] appearance-none bg-[linear-gradient(#b5b5b5,#b5b5b5),linear-gradient(#b5b5b5,#b5b5b5)] bg-[length:100%_1px,1px_4px] bg-center bg-no-repeat [&::-webkit-slider-thumb]:h-2 [&::-webkit-slider-thumb]:w-[3px] [&::-webkit-slider-thumb]:appearance-none [&::-webkit-slider-thumb]:bg-[#555]"
            />
            <button type="button" aria-label="Zoom in" className="flex w-[5px] justify-center">
              <svg viewBox="0 0 5 5" className="h-[5px] w-[5px]" aria-hidden="true">
                <path d="M0 2.500h5M2.500 0v5" stroke="#333" strokeWidth="1.300" />
              </svg>
            </button>
            <span className="ml-[10px]">48%</span>
            <button type="button" aria-label="Fit page to window" className="ml-[9px]">
              <svg viewBox="0 0 10 10" className="h-[10px] w-[10px]" fill="none" aria-hidden="true">
                <rect x=".5" y=".5" width="9" height="9" stroke="#777" />
                <path d="M2 4V2h2M6 2h2v2M8 6v2H6M4 8H2V6" stroke="#666" strokeWidth=".9" />
                <path d="M4.500 4.500h1v1h-1z" fill="#666" />
              </svg>
            </button>
            <button type="button" aria-label="Switch windows" className="mr-[7px] ml-[10px]">
              <svg viewBox="0 0 10 10" className="h-[10px] w-[10px]" fill="none" aria-hidden="true">
                <path d="M.5 1h3.500v3H.5zM6 1h3.500v4H6zM1 6.500h3V9H1zM5.500 7h3v2.500h-3z" stroke="#666" strokeWidth=".9" />
              </svg>
            </button>
          </div>
        </footer>
      </div>
    </div>
  );
}
